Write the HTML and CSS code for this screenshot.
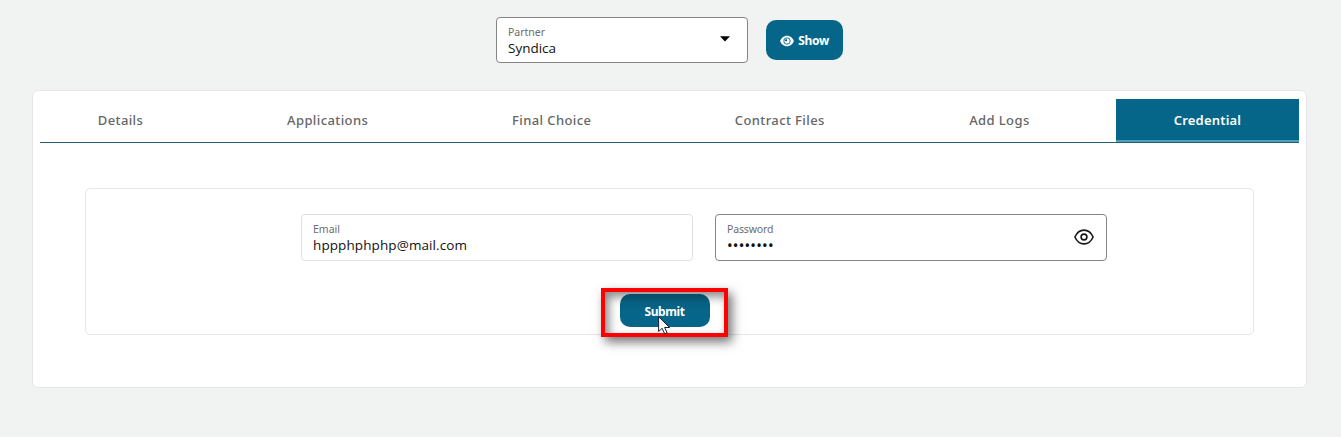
FILE: index.html
```html
<!DOCTYPE html>
<html lang="en">
<head>
<meta charset="utf-8">
<title>Credential</title>
<link rel="stylesheet" href="styles.css">
</head>
<body>
<header class="filter">
  <div class="field partner">
    <div class="field-text"><span class="label">Partner</span><span class="value">Syndica</span></div>
    <svg class="caret" width="10" height="6" viewBox="0 0 10 6"><path d="M0 0.3h10L5 5.5z"/></svg>
  </div>
  <button class="btn show">
    <svg class="show-eye" width="14" height="12" viewBox="0 0 14 12"><path fill="#fff" d="M7 .7C3.500.7 1.200 3.200.1 6c1.100 2.800 3.400 5.300 6.900 5.300S12.800 8.800 13.900 6C12.800 3.200 10.500.7 7 .7z"/><circle cx="7" cy="6" r="3.200" fill="none" stroke="#066689" stroke-width="0.900"/><path fill="#066689" d="M5 4.700L7 4l.2.9a1 1 0 0 1-1.300 1.300l-1-.2z"/></svg>
    <span>Show</span>
  </button>
</header>
<main class="card">
  <nav class="tabs">
    <a class="tab details">Details</a>
    <a class="tab applications">Applications</a>
    <a class="tab choice">Final Choice</a>
    <a class="tab contract">Contract Files</a>
    <a class="tab logs">Add Logs</a>
    <a class="tab active">Credential</a>
  </nav>
  <section class="panel">
    <div class="fields">
      <div class="field disabled">
        <div class="field-text"><span class="label">Email</span><span class="value email">hppphphphp@mail.com</span></div>
      </div>
      <div class="field">
        <div class="field-text"><span class="label password-label">Password</span><span class="value dots">••••••••</span></div>
        <svg class="eye" width="20" height="16" viewBox="0 0 20 16" fill="none" stroke="#161616"><path stroke-width="1.600" d="M.9 8C3 3.400 6.200 1.100 10 1.100S17 3.400 19.100 8C17 12.600 13.800 14.900 10 14.900S3 12.600.9 8z"/><circle cx="10" cy="8" r="2.900" stroke-width="1.600"/></svg>
      </div>
    </div>
    <div class="highlight">
      <button class="btn submit">Submit</button>
      <svg class="cursor" width="13" height="19" viewBox="0 0 13 19"><path d="M.6.7v14.800l3.500-3.200 2.600 5.500 2.400-1.100-2.500-5.200h5z" fill="#fff" stroke="#16202c" stroke-width="1"/></svg>
    </div>
  </section>
</main>
</body>
</html>
```
FILE: styles.css
```css
* { box-sizing: border-box; }
body {
  margin: 0;
  height: 437px;
  overflow: hidden;
  background: #f1f3f2;
  font-family: "Noto Sans", "Open Sans", sans-serif;
}
.filter {
  display: flex;
  gap: 18px;
  padding: 17px 0 0 496px;
  height: 90px;
}
.field {
  display: flex;
  align-items: center;
  justify-content: space-between;
  width: 392px;
  height: 47px;
  padding: 0 12px 1px 11px;
  background: #fff;
  border: 1px solid #858585;
  border-radius: 4px;
}
.field.partner { width: 252px; height: 46px; padding: 0 17px 0 11px; }
.field.disabled { border-color: #e0e0e0; }
.field-text { display: flex; flex-direction: column; }
.label { height: 15px; font-size: 10.500px; line-height: 17px; color: #6d6d6d; }
.value { height: 17px; font-family: "Open Sans", "Noto Sans", sans-serif; font-size: 13.500px; line-height: 19px; color: #111; }
.email { letter-spacing: 0.100px; }
.password-label { letter-spacing: -0.150px; }
.dots { font-family: "Noto Sans", sans-serif; font-size: 15px; letter-spacing: 0.200px; }
.caret { margin-bottom: 3px; }
.btn {
  border: 0;
  border-radius: 10px;
  background: #066689;
  color: #fff;
  font: bold 12px/16px "Noto Sans", "Open Sans", sans-serif;
}
.show {
  display: flex;
  align-items: center;
  justify-content: center;
  gap: 4px;
  width: 77px;
  height: 40px;
  margin-top: 3px;
  padding: 2px 0 0;
}
.show span { letter-spacing: -0.300px; }
.card {
  width: 1275px;
  height: 298px;
  margin-left: 32px;
  padding: 8px 7px;
  background: #fff;
  border: 1px solid #e6e6e6;
  border-radius: 6px;
}
.tabs {
  display: flex;
  justify-content: space-between;
  height: 44px;
  border-bottom: 1px solid #20606f;
}
.tab {
  width: 161px;
  height: 43px;
  text-align: center;
  white-space: nowrap;
  font-size: 13px;
  font-weight: 500;
  letter-spacing: 0.400px;
  line-height: 43px;
  color: #666;
}
.applications { width: 198px; }
.choice { width: 195px; }
.contract { width: 206px; }
.logs { width: 178px; }
.active {
  width: 183px;
  background: #066689;
  border-bottom: 2px solid #4f9fba;
  color: #fff;
  font-weight: 600;
  letter-spacing: 0.200px;
}
.panel {
  display: flex;
  flex-direction: column;
  width: 1169px;
  height: 147px;
  margin: 45px 0 0 45px;
  padding-top: 25px;
  border: 1px solid #e6e6e6;
  border-radius: 5px;
}
.fields { display: flex; gap: 22px; padding-left: 215px; }
.highlight {
  position: relative;
  display: flex;
  flex: none;
  justify-content: center;
  width: 127px;
  height: 49px;
  margin: 27px 0 0 515px;
  padding-top: 2px;
  border: 4px solid #fe0000;
  box-shadow: 4px 5px 10px rgba(0, 0, 0, 0.550), inset 4px 5px 10px rgba(0, 0, 0, 0.450);
}
.submit {
  width: 90px;
  height: 33px;
  padding: 3px 0 0;
  background: linear-gradient(#084c64 0, #066184 10px, #066689 18px);
  letter-spacing: -0.400px;
}
.cursor { position: absolute; left: 53px; top: 24px; }
```
